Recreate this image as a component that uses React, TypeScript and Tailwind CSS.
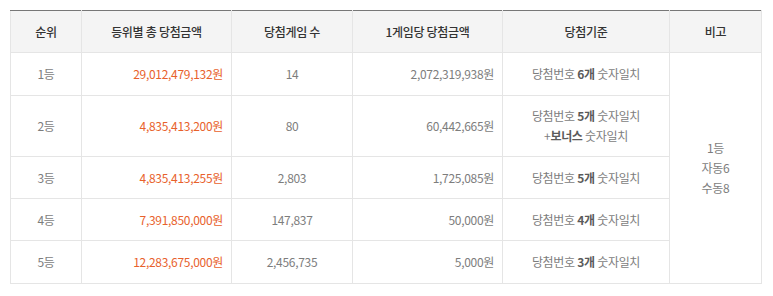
import React from "react";

interface PrizeRow {
  rank: string;
  total: string;
  games: string;
  perGame: string;
  count: string;
  height: string;
  bonus?: boolean;
}

const rows: PrizeRow[] = [
  { rank: "1등", total: "29,012,479,132원", games: "14", perGame: "2,072,319,938원", count: "6개", height: "h-[43px]" },
  { rank: "2등", total: "4,835,413,200원", games: "80", perGame: "60,442,665원", count: "5개", height: "h-[61px]", bonus: true },
  { rank: "3등", total: "4,835,413,255원", games: "2,803", perGame: "1,725,085원", count: "5개", height: "h-[42px]" },
  { rank: "4등", total: "7,391,850,000원", games: "147,837", perGame: "50,000원", count: "4개", height: "h-[42px]" },
  { rank: "5등", total: "12,283,675,000원", games: "2,456,735", perGame: "5,000원", count: "3개", height: "h-[43px]" },
];

const cell = "border border-[#e5e5e5] px-2 text-[12px] text-[#7d7d7d] tracking-[-0.3px]";

export default function App() {
  return (
    <div className="bg-white p-[10px] pr-[11px] font-['Noto_Sans_CJK_KR','Noto_Sans',sans-serif]">
      <table className="w-full border-collapse border-t border-t-[#777] table-fixed">
        <colgroup>
          <col className="w-[71px]" />
          <col className="w-[150px]" />
          <col className="w-[121px]" />
          <col className="w-[150px]" />
          <col className="w-[167px]" />
          <col />
        </colgroup>
        <thead>
          <tr className="h-[42px] bg-[#f4f4f4]">
            {["순위", "등위별 총 당첨금액", "당첨게임 수", "1게임당 당첨금액", "당첨기준", "비고"].map((h) => (
              <th key={h} className={`${cell} border-t-[#777] font-medium text-[#333]`}>
                {h}
              </th>
            ))}
          </tr>
        </thead>
        <tbody>
          {rows.map((r, i) => (
            <tr key={r.rank} className={r.height}>
              <td className={`${cell} text-center`}>{r.rank}</td>
              <td className={`${cell} text-right text-[#e8612c]`}>{r.total}</td>
              <td className={`${cell} text-center`}>{r.games}</td>
              <td className={`${cell} text-right`}>{r.perGame}</td>
              <td className={`${cell} text-center leading-[20px]`}>
                당첨번호 <b className="font-bold text-[#5a5a5a]">{r.count}</b> 숫자일치
                {r.bonus && (
                  <>
                    <br />+<b className="font-bold text-[#5a5a5a]">보너스</b> 숫자일치
                  </>
                )}
              </td>
              {i === 0 && (
                <td rowSpan={5} className={`${cell} text-center leading-[20px]`}>
                  1등
                  <br />
                  자동6
                  <br />
                  수동8
                </td>
              )}
            </tr>
          ))}
        </tbody>
      </table>
    </div>
  );
}
